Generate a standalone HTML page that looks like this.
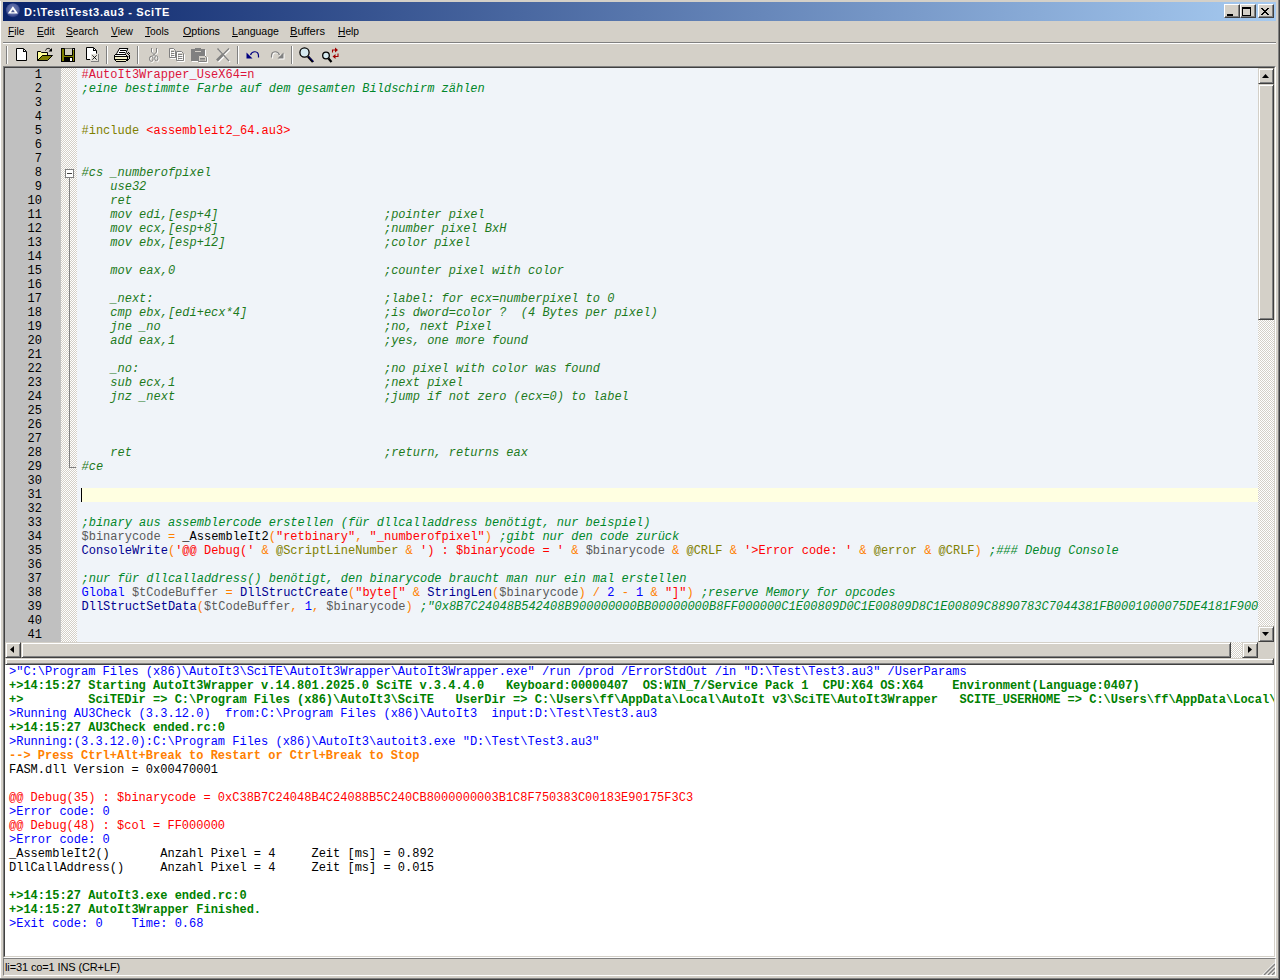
<!DOCTYPE html>
<html lang="de">
<head>
<meta charset="utf-8">
<title>D:\Test\Test3.au3 - SciTE</title>
<style>
html,body{margin:0;padding:0;}
body{width:1280px;height:980px;position:relative;overflow:hidden;background:#d4d0c8;font-family:"Liberation Sans",sans-serif;font-size:11px;color:#000;}
.abs{position:absolute;}
/* window frame */
#frL{left:0;top:0;width:1px;height:979px;background:#fff;}
#frT{left:0;top:0;width:1278px;height:1px;background:#d4d0c8;}
#frR1{left:1278px;top:0;width:1px;height:979px;background:#808080;}
#frR2{left:1279px;top:0;width:1px;height:980px;background:#404040;}
#frB1{left:0;top:978px;width:1279px;height:1px;background:#808080;}
#frB2{left:0;top:979px;width:1280px;height:1px;background:#404040;}
/* title */
#title{left:3px;top:2px;width:1273px;height:19px;background:linear-gradient(90deg,#0a246a 0%,#a6caf0 100%);}
#ttext{left:21px;top:3px;color:#fff;font-weight:bold;font-size:11px;line-height:14px;letter-spacing:0.65px;white-space:pre;}
.cbtn{top:2px;width:16px;height:14px;background:#d4d0c8;box-sizing:border-box;border:1px solid;border-color:#fff #404040 #404040 #fff;box-shadow:inset -1px -1px 0 #808080;}
/* menu */
#menu{left:3px;top:21px;width:1273px;height:21px;}
#menu span{position:absolute;top:4px;line-height:13px;font-size:11px;white-space:pre;transform:scaleX(0.93);transform-origin:0 0;}
#menu u{text-decoration:underline;text-decoration-thickness:1px;text-underline-offset:1px;}
#msep1{left:3px;top:42px;width:1273px;height:1px;background:#808080;}
#msep2{left:3px;top:43px;width:1273px;height:1px;background:#fff;}
/* toolbar */
.tsep{top:46px;width:1px;height:18px;background:#808080;box-shadow:1px 0 0 #fff;}
.ico{position:absolute;overflow:visible;}
/* sunken frames */
.sunk{box-sizing:border-box;border:1px solid;border-color:#808080 #fff #fff #808080;}
.sunk>.in{position:absolute;left:0;top:0;right:0;bottom:0;box-sizing:border-box;border:1px solid;border-color:#404040 #d4d0c8 #d4d0c8 #404040;}
/* editor */
#ed{left:3px;top:66px;width:1273px;height:892px;}
#edc{left:5px;top:68px;width:1253px;height:574px;background:#f0f4f9;overflow:hidden;}
#lnm{left:0;top:0;width:56px;height:574px;background:#c0c0c0;}
#fold{left:56px;top:0;width:16px;height:574px;background-color:#d4d0c8;background-image:linear-gradient(45deg,#fff 25%,transparent 25%,transparent 75%,#fff 75%),linear-gradient(45deg,#fff 25%,transparent 25%,transparent 75%,#fff 75%);background-size:2px 2px;background-position:0 0,1px 1px;}
.mono{font-family:"Liberation Mono",monospace;font-size:12px;line-height:14px;}
.mono div{white-space:pre;}
#lnum{left:0;top:0;width:37px;text-align:right;color:#000;}
#code{left:76.5px;top:0;}
#code div,#out div{height:14px;}
#cur{left:76px;top:420px;width:1177px;height:14px;background:#ffffe1;}
#caret{left:76px;top:420px;width:1px;height:14px;background:#000;}
/* scrollbars */
.sbtn{background:#d4d0c8;box-sizing:border-box;border:1px solid;border-color:#d4d0c8 #404040 #404040 #d4d0c8;box-shadow:inset 1px 1px 0 #fff,inset -1px -1px 0 #808080;}
.track{background-color:#d4d0c8;background-image:linear-gradient(45deg,#fff 25%,transparent 25%,transparent 75%,#fff 75%),linear-gradient(45deg,#fff 25%,transparent 25%,transparent 75%,#fff 75%);background-size:2px 2px;background-position:0 0,1px 1px;}
/* colours */
.sp{color:#dc143c}.c{color:#00872a;font-style:italic}.cb{color:#1c7a1c;font-style:italic}
.pp{color:#808000}.s{color:#ff0000}.v{color:#5a5a5a}.o{color:#ff8000}.f{color:#000090}
.k{color:#0000ff}.m{color:#808000}.n{color:#0000ff}
/* output */
#op{left:5px;top:658px;width:1269px;height:7px;box-sizing:border-box;border:1px solid;border-color:#d4d0c8 #404040 #404040 #d4d0c8;box-shadow:inset 1px 1px 0 #fff,inset -1px -1px 0 #808080;background:#d4d0c8;}
#opc{left:5px;top:665px;width:1269px;height:291px;background:#fff;overflow:hidden;}
#out{left:4px;top:0;}
.b{color:#0000ff}.g{color:#007f00;font-weight:bold}.w{color:#ff8000;font-weight:bold}.r{color:#ff0000}
/* status */
#st{left:3px;top:958px;width:1273px;height:18px;box-sizing:border-box;border:1px solid;border-color:#808080 #fff #fff #808080;}
#sttext{left:5px;top:960px;line-height:14px;font-size:11px;white-space:pre;letter-spacing:-0.12px;}
</style>
</head>
<body>
<!--FRAME-->
<div class="abs" id="frL"></div><div class="abs" id="frT"></div>
<div class="abs" id="frR1"></div><div class="abs" id="frR2"></div>
<div class="abs" id="frB1"></div><div class="abs" id="frB2"></div>
<!--TITLE-->
<div class="abs" id="title">
<svg class="ico" style="left:2px;top:0" width="16" height="16" viewBox="5 2 16 16"><defs><radialGradient id="tg" cx="50%" cy="45%" r="55%"><stop offset="0" stop-color="#6f7db4"/><stop offset="0.7" stop-color="#52629e"/><stop offset="1" stop-color="#22327a"/></radialGradient></defs><circle cx="12.9" cy="10.2" r="7" fill="url(#tg)"/><path d="M12.9 6.2L18 13.4H7.8Z" fill="#fff"/><path d="M12.9 9.6L14.9 12.3H10.9Z" fill="#4a5890"/></svg>
<div class="abs" id="ttext">D:\Test\Test3.au3 - SciTE</div>
<div class="abs cbtn" style="left:1221px"><svg class="ico" style="left:2px;top:9px" width="6" height="2"><rect width="6" height="2" fill="#000"/></svg></div>
<div class="abs cbtn" style="left:1237px"><svg class="ico" style="left:1px;top:2px" width="9" height="9"><path d="M0 0H9V9H0Z M1 2V8H8V2Z" fill="#000" fill-rule="evenodd"/></svg></div>
<div class="abs cbtn" style="left:1255px"><svg class="ico" style="left:2px;top:3px" width="8" height="7" shape-rendering="crispEdges"><path d="M0 0h2v1h-2zM6 0h2v1h-2zM1 1h2v1h-2zM5 1h2v1h-2zM2 2h4v1h-4zM3 3h2v1h-2zM2 4h4v1h-4zM1 5h2v1h-2zM5 5h2v1h-2zM0 6h2v1h-2zM6 6h2v1h-2z" fill="#000"/></svg></div>
</div>
<!--MENU-->
<div class="abs" id="menu">
<span style="left:5px"><u>F</u>ile</span>
<span style="left:34px"><u>E</u>dit</span>
<span style="left:63px"><u>S</u>earch</span>
<span style="left:108px"><u>V</u>iew</span>
<span style="left:142px"><u>T</u>ools</span>
<span style="left:179.6px;transform:scaleX(.975)"><u>O</u>ptions</span>
<span style="left:228.5px;transform:scaleX(.96)"><u>L</u>anguage</span>
<span style="left:287.3px;transform:scaleX(1.01)"><u>B</u>uffers</span>
<span style="left:334.6px"><u>H</u>elp</span>
</div>
<div class="abs" id="msep1"></div><div class="abs" id="msep2"></div>
<!--TOOLBAR-->
<div class="abs" id="tb" style="left:0;top:44px;width:1280px;height:22px;"><svg class="ico" style="left:0;top:0" width="400" height="22" viewBox="0 44 400 22"><rect x="6" y="46" width="1" height="18" fill="#808080"/><rect x="7" y="46" width="1" height="18" fill="#fff"/>
<path d="M16.5 48.5H23.5L26.5 51.5V60.5H16.5Z" fill="#fff" stroke="#000"/><path d="M23 48.5V52H26.5Z" fill="#000"/><rect x="24" y="50" width="1" height="1" fill="#fff"/>
<path d="M37.5 60.5V51.5H40.5L41.5 52.5H47.5V55.5H42.5Z" fill="#ffff99" stroke="#000"/><path d="M37.5 60.5L42.5 55.5H52.5L47.5 60.5Z" fill="#808000" stroke="#000"/><path d="M45.5 50.5C46.5 47.8 50 47.6 51 50.5" fill="none" stroke="#000"/><path d="M48.5 51.5H52V48Z" fill="#000"/>
<rect x="61.5" y="48.5" width="13" height="13" fill="#808000" stroke="#000"/><path d="M64.5 48.5V55.5H72.5V48.5" fill="#cfcdbd" stroke="#000"/><rect x="64" y="57" width="9" height="4" fill="#000"/><rect x="70" y="58" width="2" height="3" fill="#fff"/><rect x="73" y="49" width="1" height="1" fill="#d4d0c8"/>
<path d="M90 59.5H86.5V47.5H93.5L96.5 50.5V53.5" fill="none" stroke="#000"/><path d="M87 48H93L96 51V59H87Z" fill="#fff"/><path d="M93 47.5V51H96.5Z" fill="#000"/><rect x="94" y="49" width="1" height="1" fill="#fff"/><rect x="91" y="54" width="8" height="8" fill="#808080"/><rect x="91" y="54" width="7" height="7" fill="#e6e3dc"/><path d="M92.3 55.3L96.7 59.7M96.7 55.3L92.3 59.7" stroke="#000" stroke-width="0.85" fill="none"/>
<rect x="106" y="46" width="1" height="18" fill="#808080"/><rect x="107" y="46" width="1" height="18" fill="#fff"/>
<rect x="137" y="46" width="1" height="18" fill="#808080"/><rect x="138" y="46" width="1" height="18" fill="#fff"/>
<rect x="237" y="46" width="1" height="18" fill="#808080"/><rect x="238" y="46" width="1" height="18" fill="#fff"/>
<rect x="291" y="46" width="1" height="18" fill="#808080"/><rect x="292" y="46" width="1" height="18" fill="#fff"/>
<path d="M119.5 48.5H127.5L125.5 54H116.5Z" fill="#fff"/><path d="M119.5 48.5L116.5 53.8M127.8 48.5L125.6 53.8" stroke="#000" fill="none"/><g shape-rendering="crispEdges"><rect x="119" y="48" width="9" height="1"/><rect x="120" y="50" width="6" height="1"/><rect x="119" y="52" width="6" height="1"/><rect x="115" y="54" width="11" height="1"/><rect x="115" y="55" width="11" height="1" fill="#f4f4f0"/><rect x="114" y="55" width="1" height="1"/><rect x="126" y="55" width="1" height="1"/><rect x="114" y="56" width="14" height="1"/><rect x="115" y="57" width="12" height="2" fill="#f2efc6"/><rect x="114" y="57" width="1" height="2"/><rect x="127" y="57" width="1" height="2"/><rect x="114" y="59" width="14" height="1"/><rect x="116" y="60" width="10" height="1" fill="#f2efc6"/><rect x="115" y="60" width="1" height="1"/><rect x="126" y="60" width="1" height="1"/><rect x="116" y="61" width="10" height="1"/><rect x="127" y="53" width="1" height="1"/><rect x="128" y="52" width="1" height="1"/><rect x="128" y="54" width="1" height="1"/><rect x="129" y="53" width="1" height="1"/><rect x="128" y="56" width="1" height="1" fill="#808080"/><rect x="129" y="55" width="1" height="4"/><rect x="128" y="59" width="1" height="1"/><rect x="127" y="60" width="1" height="1"/></g>
<g transform="translate(1 1)" stroke="#fff" fill="none" ><path d="M151.5 48V52L155.5 56M156.5 48V52L152.5 56"/><ellipse cx="151.3" cy="58.8" rx="1.8" ry="2.6"/><ellipse cx="156.3" cy="58.3" rx="1.6" ry="2.5"/></g><g stroke="#808080" fill="none" ><path d="M151.5 48V52L155.5 56M156.5 48V52L152.5 56"/><ellipse cx="151.3" cy="58.8" rx="1.8" ry="2.6"/><ellipse cx="156.3" cy="58.3" rx="1.6" ry="2.5"/></g>
<g transform="translate(1 1)" stroke="#fff" fill="none" ><path d="M169.5 48.5H173.5L175.5 50.5V57.5H169.5Z"/><path d="M171 51.5H174M171 53.5H174M171 55.5H174"/><path d="M176.5 51.5H181.5L183.5 53.5V60.5H176.5Z"/><path d="M178 54.5H182M178 56.5H182M178 58.5H182"/></g><g stroke="#808080" fill="none" ><path d="M169.5 48.5H173.5L175.5 50.5V57.5H169.5Z"/><path d="M171 51.5H174M171 53.5H174M171 55.5H174"/><path d="M176.5 51.5H181.5L183.5 53.5V60.5H176.5Z"/><path d="M178 54.5H182M178 56.5H182M178 58.5H182"/></g>
<rect x="192" y="50" width="14" height="12" fill="#fff"/><rect x="191" y="49" width="14" height="12" fill="#808080"/><rect x="195" y="48" width="6" height="2" fill="#808080"/><rect x="195" y="51" width="6" height="1" fill="#d4d0c8"/><rect x="199" y="57" width="9" height="6" fill="#fff"/><rect x="198" y="56" width="9" height="6" fill="#d4d0c8" stroke="none"/><path d="M198.5 55.5H204.5L206.5 57.5V61.5H198.5Z" fill="#d4d0c8" stroke="#808080"/><path d="M200 58.5H205M200 59.9H205" stroke="#808080"/>
<g transform="translate(1 1)" stroke="#fff" fill="none" ><path d="M217.5 48.5L229 61" stroke-width="1.3"/><path d="M229 48.5L222 55.5" stroke-width="1.3"/><path d="M222.5 55L217 60.5" stroke-width="2.6"/></g><g stroke="#808080" fill="none" ><path d="M217.5 48.5L229 61" stroke-width="1.3"/><path d="M229 48.5L222 55.5" stroke-width="1.3"/><path d="M222.5 55L217 60.5" stroke-width="2.6"/></g>
<path d="M250.5 55C252 50.5 258.5 50.5 258.5 56V57.5" fill="none" stroke="#000080" stroke-width="1.2"/><path d="M246.5 58.5V52.5L252.5 58.5Z" fill="#000080"/>
<g transform="translate(1 1)"><path d="M283.5 58.5V52.5L277.5 58.5Z" fill="#fff"/></g><g transform="translate(1 1)" stroke="#fff" fill="none" ><path d="M279.5 55C278 50.5 271.5 50.5 271.5 56V57.5" fill="none" stroke-width="1.2"/></g><g stroke="#808080" fill="none" ><path d="M279.5 55C278 50.5 271.5 50.5 271.5 56V57.5" fill="none" stroke-width="1.2"/></g><path d="M283.5 58.5V52.5L277.5 58.5Z" fill="#808080"/>
<circle cx="304.5" cy="52.5" r="4.6" fill="#d6eaf0" stroke="#000" stroke-width="1.3"/><path d="M308 56.5L313 62" stroke="#000" stroke-width="2.6"/><path d="M308.6 56.6L313.4 61.6" stroke="#000080" stroke-width="1"/>
<circle cx="326" cy="55.5" r="3.3" fill="#d6eaf0" stroke="#000" stroke-width="1.3"/><path d="M328.5 58.5L331.5 62" stroke="#000" stroke-width="2.2"/><path d="M332.5 52.5V50H336" fill="none" stroke="#a00000" stroke-width="1.1"/><path d="M335 47.5L338 50L335 52.5Z" fill="#a00000"/><path d="M338 53.5V56.5H334.5" fill="none" stroke="#a00000" stroke-width="1.1"/><path d="M335.5 54L332.5 56.5L335.5 59Z" fill="#a00000"/></svg></div>
<!--EDITOR-->
<div class="abs sunk" id="ed"><div class="in"></div></div>
<div class="abs" id="edc">
<div class="abs" id="lnm"></div>
<div class="abs" id="fold"></div>
<div class="abs" style="left:64px;top:110px;width:1px;height:290px;background:#808080"></div><div class="abs" style="left:64px;top:399px;width:7px;height:1px;background:#808080"></div><div class="abs" style="left:60px;top:101px;width:9px;height:9px;box-sizing:border-box;border:1px solid #808080;background:#fff"></div><div class="abs" style="left:62px;top:105px;width:5px;height:1px;background:#404040"></div>
<div class="abs" id="cur"></div>
<div class="abs" id="caret"></div>
<div class="abs mono" id="lnum">
<div>1</div>
<div>2</div>
<div>3</div>
<div>4</div>
<div>5</div>
<div>6</div>
<div>7</div>
<div>8</div>
<div>9</div>
<div>10</div>
<div>11</div>
<div>12</div>
<div>13</div>
<div>14</div>
<div>15</div>
<div>16</div>
<div>17</div>
<div>18</div>
<div>19</div>
<div>20</div>
<div>21</div>
<div>22</div>
<div>23</div>
<div>24</div>
<div>25</div>
<div>26</div>
<div>27</div>
<div>28</div>
<div>29</div>
<div>30</div>
<div>31</div>
<div>32</div>
<div>33</div>
<div>34</div>
<div>35</div>
<div>36</div>
<div>37</div>
<div>38</div>
<div>39</div>
<div>40</div>
<div>41</div>
</div>
<div class="abs mono" id="code">
<div><span class="sp">#AutoIt3Wrapper_UseX64=n</span></div>
<div><span class="c">;eine bestimmte Farbe auf dem gesamten Bildschirm zählen</span></div>
<div></div>
<div></div>
<div><span class="pp">#include</span> <span class="s">&lt;assembleit2_64.au3&gt;</span></div>
<div></div>
<div></div>
<div><span class="cb">#cs _numberofpixel</span></div>
<div><span class="cb">    use32</span></div>
<div><span class="cb">    ret</span></div>
<div><span class="cb">    mov edi,[esp+4]                       ;pointer pixel</span></div>
<div><span class="cb">    mov ecx,[esp+8]                       ;number pixel BxH</span></div>
<div><span class="cb">    mov ebx,[esp+12]                      ;color pixel</span></div>
<div></div>
<div><span class="cb">    mov eax,0                             ;counter pixel with color</span></div>
<div></div>
<div><span class="cb">    _next:                                ;label: for ecx=numberpixel to 0</span></div>
<div><span class="cb">    cmp ebx,[edi+ecx*4]                   ;is dword=color ?  (4 Bytes per pixel)</span></div>
<div><span class="cb">    jne _no                               ;no, next Pixel</span></div>
<div><span class="cb">    add eax,1                             ;yes, one more found</span></div>
<div></div>
<div><span class="cb">    _no:                                  ;no pixel with color was found</span></div>
<div><span class="cb">    sub ecx,1                             ;next pixel</span></div>
<div><span class="cb">    jnz _next                             ;jump if not zero (ecx=0) to label</span></div>
<div></div>
<div></div>
<div></div>
<div><span class="cb">    ret                                   ;return, returns eax</span></div>
<div><span class="cb">#ce</span></div>
<div></div>
<div></div>
<div></div>
<div><span class="c">;binary aus assemblercode erstellen (für dllcalladdress benötigt, nur beispiel)</span></div>
<div><span class="v">$binarycode</span> <span class="o">=</span> _AssembleIt2<span class="o">(</span><span class="s">"retbinary"</span><span class="o">,</span> <span class="s">"_numberofpixel"</span><span class="o">)</span> <span class="c">;gibt nur den code zurück</span></div>
<div><span class="f">ConsoleWrite</span><span class="o">(</span><span class="s">'@@ Debug('</span> <span class="o">&amp;</span> <span class="m">@ScriptLineNumber</span> <span class="o">&amp;</span> <span class="s">') : $binarycode = '</span> <span class="o">&amp;</span> <span class="v">$binarycode</span> <span class="o">&amp;</span> <span class="m">@CRLF</span> <span class="o">&amp;</span> <span class="s">'&gt;Error code: '</span> <span class="o">&amp;</span> <span class="m">@error</span> <span class="o">&amp;</span> <span class="m">@CRLF</span><span class="o">)</span> <span class="c">;### Debug Console</span></div>
<div></div>
<div><span class="c">;nur für dllcalladdress() benötigt, den binarycode braucht man nur ein mal erstellen</span></div>
<div><span class="k">Global</span> <span class="v">$tCodeBuffer</span> <span class="o">=</span> <span class="f">DllStructCreate</span><span class="o">(</span><span class="s">"byte["</span> <span class="o">&amp;</span> <span class="f">StringLen</span><span class="o">(</span><span class="v">$binarycode</span><span class="o">)</span> <span class="o">/</span> <span class="n">2</span> <span class="o">-</span> <span class="n">1</span> <span class="o">&amp;</span> <span class="s">"]"</span><span class="o">)</span> <span class="c">;reserve Memory for opcodes</span></div>
<div><span class="f">DllStructSetData</span><span class="o">(</span><span class="v">$tCodeBuffer</span><span class="o">,</span> <span class="n">1</span><span class="o">,</span> <span class="v">$binarycode</span><span class="o">)</span> <span class="c" style="letter-spacing:.026px">;"0x8B7C24048B542408B900000000BB00000000B8FF000000C1E00809D0C1E00809D8C1E00809C8890783C7044381FB0001000075DE4181F9004</span></div>
<div></div>
<div></div>
</div>
</div>
<div class="abs track" style="left:1258px;top:68px;width:16px;height:574px"></div>
<div class="abs sbtn" style="left:1258px;top:68px;width:16px;height:16px"><svg class="ico" style="left:-1px;top:-1px" width="16" height="16"><path d="M4 10H11L7.5 6Z" fill="#000"/></svg></div>
<div class="abs sbtn" style="left:1258px;top:84px;width:16px;height:236px"></div>
<div class="abs sbtn" style="left:1258px;top:626px;width:16px;height:16px"><svg class="ico" style="left:-1px;top:-1px" width="16" height="16"><path d="M4 6H11L7.5 10Z" fill="#000"/></svg></div>
<div class="abs track" style="left:5px;top:642px;width:1253px;height:16px"></div>
<div class="abs sbtn" style="left:5px;top:642px;width:16px;height:16px"><svg class="ico" style="left:-1px;top:-1px" width="16" height="16"><path d="M9 4V11L5 7.5Z" fill="#000"/></svg></div>
<div class="abs sbtn" style="left:21px;top:642px;width:1210px;height:16px"></div>
<div class="abs sbtn" style="left:1242px;top:642px;width:16px;height:16px"><svg class="ico" style="left:-1px;top:-1px" width="16" height="16"><path d="M6 4V11L10 7.5Z" fill="#000"/></svg></div>
<div class="abs" style="left:1258px;top:642px;width:16px;height:16px;background:#d4d0c8"></div>
<!--OUTPUT-->
<div class="abs" id="op"></div>
<div class="abs" id="opc">
<div class="abs mono" id="out">
<div class="b">&gt;"C:\Program Files (x86)\AutoIt3\SciTE\AutoIt3Wrapper\AutoIt3Wrapper.exe" /run /prod /ErrorStdOut /in "D:\Test\Test3.au3" /UserParams</div>
<div class="g">+&gt;14:15:27 Starting AutoIt3Wrapper v.14.801.2025.0 SciTE v.3.4.4.0   Keyboard:00000407  OS:WIN_7/Service Pack 1  CPU:X64 OS:X64    Environment(Language:0407)</div>
<div class="g">+&gt;         SciTEDir =&gt; C:\Program Files (x86)\AutoIt3\SciTE   UserDir =&gt; C:\Users\ff\AppData\Local\AutoIt v3\SciTE\AutoIt3Wrapper   SCITE_USERHOME =&gt; C:\Users\ff\AppData\Local\AutoIt v3\SciTE</div>
<div class="b">&gt;Running AU3Check (3.3.12.0)  from:C:\Program Files (x86)\AutoIt3  input:D:\Test\Test3.au3</div>
<div class="g">+&gt;14:15:27 AU3Check ended.rc:0</div>
<div class="b">&gt;Running:(3.3.12.0):C:\Program Files (x86)\AutoIt3\autoit3.exe "D:\Test\Test3.au3"</div>
<div class="w">--&gt; Press Ctrl+Alt+Break to Restart or Ctrl+Break to Stop</div>
<div>FASM.dll Version = 0x00470001</div>
<div></div>
<div class="r">@@ Debug(35) : $binarycode = 0xC38B7C24048B4C24088B5C240CB8000000003B1C8F750383C00183E90175F3C3</div>
<div class="b">&gt;Error code: 0</div>
<div class="r">@@ Debug(48) : $col = FF000000</div>
<div class="b">&gt;Error code: 0</div>
<div>_AssembleIt2()       Anzahl Pixel = 4     Zeit [ms] = 0.892</div>
<div>DllCallAddress()     Anzahl Pixel = 4     Zeit [ms] = 0.015</div>
<div></div>
<div class="g">+&gt;14:15:27 AutoIt3.exe ended.rc:0</div>
<div class="g">+&gt;14:15:27 AutoIt3Wrapper Finished.</div>
<div class="b">&gt;Exit code: 0    Time: 0.68</div>
</div>
</div>
<!--STATUS-->
<div class="abs" id="st"></div>
<svg class="abs" style="left:1262px;top:962px" width="13" height="13" viewBox="0 0 13 13"><g stroke="#fff" stroke-width="1"><path d="M0.5 13L13 0.5M4.5 13L13 4.5M8.5 13L13 8.5"/></g><g stroke="#808080" stroke-width="1.25"><path d="M2 13L13 2M6 13L13 6M10 13L13 10"/></g></svg>
<div class="abs" id="sttext">li=31 co=1 INS (CR+LF)</div>
</body>
</html>
